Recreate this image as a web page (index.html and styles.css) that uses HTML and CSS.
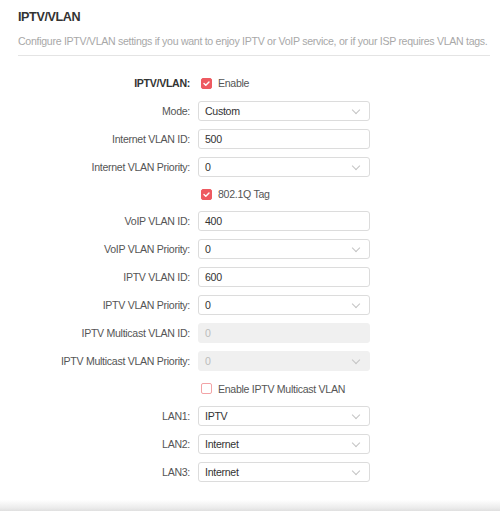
FILE: index.html
```html
<!DOCTYPE html>
<html>
<head>
<meta charset="utf-8">
<link rel="stylesheet" href="styles.css">
</head>
<body>
<div class="page">
  <div class="header">
    <h1 class="title">IPTV/VLAN</h1>
    <p class="desc">Configure IPTV/VLAN settings if you want to enjoy IPTV or VoIP service, or if your ISP requires VLAN tags.</p>
  </div>
  <div class="form">
    <div class="label bold cb-row">IPTV/VLAN:</div>
    <div class="cb-row"><span class="cb checked"><svg viewBox="0 0 11 11" width="11" height="11"><path d="M3 5.6 L4.8 7.3 L8 3.9" fill="none" stroke="#fff" stroke-width="1.4" stroke-linecap="round" stroke-linejoin="round"/></svg></span><span class="cb-text">Enable</span></div>

    <div class="label">Mode:</div>
    <div class="field select">Custom<span class="chev"></span></div>

    <div class="label">Internet VLAN ID:</div>
    <div class="field">500</div>

    <div class="label">Internet VLAN Priority:</div>
    <div class="field select">0<span class="chev"></span></div>

    <div class="label cb-row"></div>
    <div class="cb-row"><span class="cb checked"><svg viewBox="0 0 11 11" width="11" height="11"><path d="M3 5.6 L4.8 7.3 L8 3.9" fill="none" stroke="#fff" stroke-width="1.4" stroke-linecap="round" stroke-linejoin="round"/></svg></span><span class="cb-text">802.1Q Tag</span></div>

    <div class="label">VoIP VLAN ID:</div>
    <div class="field">400</div>

    <div class="label">VoIP VLAN Priority:</div>
    <div class="field select">0<span class="chev"></span></div>

    <div class="label">IPTV VLAN ID:</div>
    <div class="field">600</div>

    <div class="label">IPTV VLAN Priority:</div>
    <div class="field select">0<span class="chev"></span></div>

    <div class="label">IPTV Multicast VLAN ID:</div>
    <div class="field disabled">0</div>

    <div class="label">IPTV Multicast VLAN Priority:</div>
    <div class="field select disabled">0<span class="chev"></span></div>

    <div class="label cb-row"></div>
    <div class="cb-row"><span class="cb"></span><span class="cb-text">Enable IPTV Multicast VLAN</span></div>

    <div class="label">LAN1:</div>
    <div class="field select">IPTV<span class="chev"></span></div>

    <div class="label">LAN2:</div>
    <div class="field select">Internet<span class="chev"></span></div>

    <div class="label">LAN3:</div>
    <div class="field select">Internet<span class="chev"></span></div>
  </div>
  <div class="shadow"></div>
</div>
</body>
</html>
```

FILE: styles.css
```css
html, body {
  margin: 0;
  padding: 0;
  background: #fff;
}
body {
  font-family: "Liberation Sans", Arial, sans-serif;
  font-size: 10.6px;
  letter-spacing: -0.3px;
  color: #555;
}
.page {
  height: 511px;
  display: flex;
  flex-direction: column;
  overflow: hidden;
}
.header {
  margin: 0 10px 0 18px;
  padding-top: 10px;
  border-bottom: 1px solid #e4e4e4;
}
.title {
  margin: 0;
  font-size: 12.6px;
  letter-spacing: -0.4px;
  font-weight: bold;
  color: #333;
  line-height: 15px;
}
.desc {
  margin: 10px 0 0;
  color: #a8a8a8;
  line-height: 13px;
  padding-bottom: 7px;
  white-space: nowrap;
}
.form {
  display: grid;
  grid-template-columns: 172px 172px;
  column-gap: 8px;
  row-gap: 8px;
  padding: 18px 0 0 18px;
}
.label {
  text-align: right;
  height: 20px;
  line-height: 20px;
  color: #555;
  white-space: nowrap;
}
.label.bold {
  font-weight: bold;
  color: #333;
}
.cb-row {
  height: 18.7px;
  display: flex;
  align-items: center;
  justify-content: flex-end;
}
div.cb-row:nth-child(even) {
  justify-content: flex-start;
  padding-left: 3px;
}
.cb {
  width: 11px;
  height: 11px;
  box-sizing: border-box;
  border: 1px solid #f3a3a6;
  border-radius: 2px;
  display: inline-block;
  position: relative;
}
.cb svg {
  position: absolute;
  left: -1px;
  top: -1px;
}
.cb.checked {
  background: #ee5a61;
  border-color: #ee5a61;
}
.cb-text {
  margin-left: 6px;
  color: #555;
}
.field {
  height: 20px;
  box-sizing: border-box;
  border: 1px solid #dcdcdc;
  border-radius: 3px;
  padding: 0 6px;
  line-height: 18px;
  color: #333;
  position: relative;
}
.field.disabled {
  background: #f0f0f0;
  border-color: #f0f0f0;
  color: #bcbcbc;
}
.chev {
  position: absolute;
  right: 10px;
  top: 5px;
  width: 5px;
  height: 5px;
  border-right: 1px solid #c4c4c4;
  border-bottom: 1px solid #c4c4c4;
  transform: rotate(45deg);
}
.shadow {
  margin-top: auto;
  height: 11px;
  background: linear-gradient(#fff, #ececec 70%, #e0e0e0);
}
```
